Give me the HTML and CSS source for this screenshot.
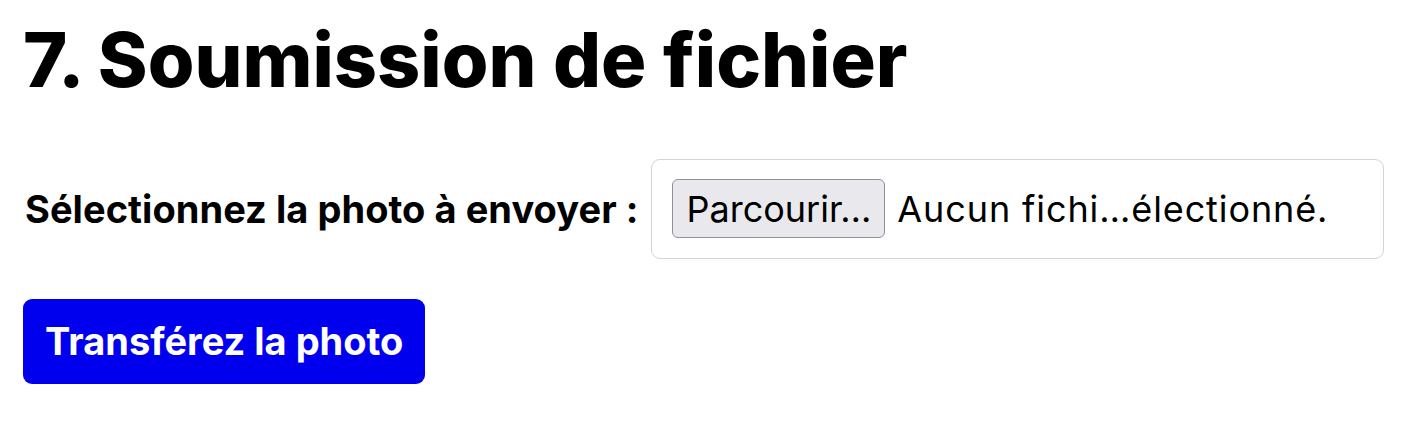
FILE: index.html
```html
<!DOCTYPE html>
<html lang="fr">
<head>
<meta charset="utf-8">
<title>Soumission de fichier</title>
<link rel="stylesheet" href="styles.css">
</head>
<body>
<main class="page">
  <h1 class="title">7. Soumission de fichier</h1>
  <form class="upload-form">
    <div class="field-row">
      <label class="field-label" for="photo">Sélectionnez la photo à envoyer :</label>
      <div class="file-box" id="photo">
        <span class="file-button">Parcourir…</span>
        <span class="file-name">Aucun fichi…électionné.</span>
      </div>
    </div>
    <button type="button" class="submit">Transférez la photo</button>
  </form>
</main>
</body>
</html>
```

FILE: styles.css
```css
html, body {
  margin: 0;
  padding: 0;
  background: #ffffff;
}

.page {
  display: flex;
  flex-direction: column;
  padding: 22px 0 0 23px;
  font-family: Inter, "Liberation Sans", sans-serif;
  color: #000000;
}

.title {
  margin: 0;
  font-size: 75.5px;
  line-height: 1;
  font-weight: 800;
}

.upload-form {
  display: flex;
  flex-direction: column;
  align-items: flex-start;
  margin-top: 61px;
  gap: 40px;
}

.field-row {
  display: flex;
  align-items: center;
  gap: 13px;
}

.field-label {
  font-size: 38px;
  font-weight: 700;
  padding-left: 2px;
  letter-spacing: 0.05px;
}

.file-box {
  display: flex;
  align-items: center;
  gap: 12px;
  box-sizing: border-box;
  width: 733px;
  height: 100px;
  padding: 0 20px;
  border: 1.5px solid #d4d4d4;
  border-radius: 9px;
}

.file-button {
  display: flex;
  align-items: center;
  box-sizing: border-box;
  height: 59px;
  padding: 0 13px;
  background: #e9e9ed;
  border: 1.5px solid #8f8f9d;
  border-radius: 6px;
  font-family: Inter, "Liberation Sans", sans-serif;
  font-size: 36px;
  white-space: nowrap;
}

.file-name {
  font-family: Inter, "Liberation Sans", sans-serif;
  font-size: 36px;
  letter-spacing: 0.9px;
  white-space: nowrap;
}

.submit {
  box-sizing: border-box;
  height: 85px;
  padding: 0 22px;
  border: none;
  border-radius: 9px;
  background: #0000ee;
  color: #ffffff;
  font-family: Inter, "Liberation Sans", sans-serif;
  font-size: 38px;
  font-weight: 700;
}
```
